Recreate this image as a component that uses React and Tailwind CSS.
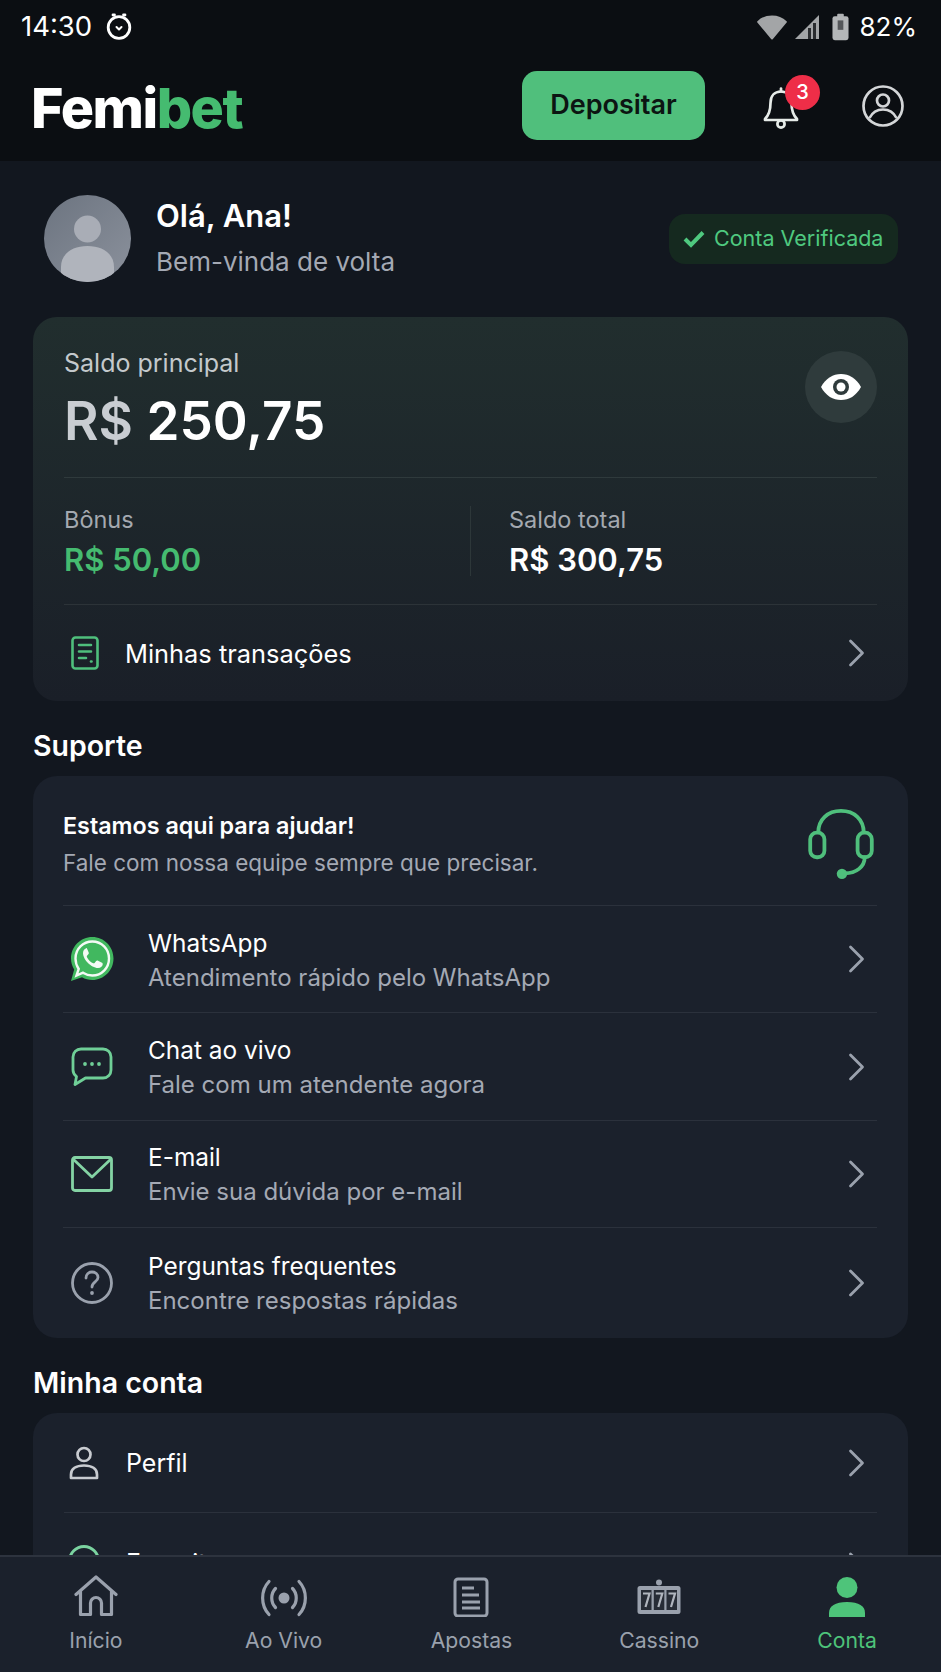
import React from 'react';

const font = { fontFamily: 'Inter, "Noto Sans", sans-serif' };

const Chevron = () => (
  <svg width="18" height="28" viewBox="0 0 18 28" fill="none" className="shrink-0">
    <path d="M2.5 2l12 12-12 12" stroke="#9aa1ad" strokeWidth="2.8" strokeLinecap="round" strokeLinejoin="round" />
  </svg>
);

const AlarmIcon = () => (
  <svg width="28" height="28" viewBox="0 0 28 28" fill="none" stroke="#fff" strokeWidth="2.8">
    <circle cx="14" cy="14.500" r="10.800" />
    <path d="M8 2h1.500M20 2h-1.500" strokeLinecap="round" />
    <path d="M11.500 14l2.500 2.500 2.500-2.500" strokeWidth="2" strokeLinecap="round" strokeLinejoin="round" />
  </svg>
);

const StatusIcons = () => (
  <div className="flex items-center">
    <svg width="32" height="26" viewBox="0 0 34 28" className="mr-[6px]">
      <path d="M2 8.500C6 4.500 11 2.500 17 2.500s11 2 15 6L17 26.500z" fill="#a3a5a7" stroke="#a3a5a7" strokeWidth="2" strokeLinejoin="round" />
    </svg>
    <svg width="26" height="26" viewBox="0 0 26 26" className="mr-[12px]">
      <path d="M1 25L25 1v24z" fill="#a3a5a7" />
      <path d="M14 14h3v11h-3zM19 9h3v16h-3z" fill="#2a2c2f" />
    </svg>
    <svg width="17" height="28" viewBox="0 0 18 28" className="mr-[11px]">
      <rect x="5.500" y="0" width="7" height="4" rx="1" fill="#b0b2b4" />
      <rect x="0.500" y="2.500" width="17" height="25.500" rx="2.500" fill="#b4b6b8" />
      <rect x="6" y="7" width="6" height="10" fill="#55575a" />
    </svg>
  </div>
);

const BellIcon = () => (
  <svg width="38" height="42" viewBox="0 0 38 42" fill="none" stroke="#e6ebe8" strokeWidth="2.700" strokeLinejoin="round">
    <path d="M19 4.500c-6.500 0-10.500 4.500-10.500 11.500 0 8-1.500 12-5.500 16v1h32v-1c-4-4-5.500-8-5.500-16 0-7-4-11.500-10.500-11.500z" />
    <path d="M19 1.500v3" strokeLinecap="round" />
    <circle cx="19" cy="37" r="3.600" />
  </svg>
);

const AccountIcon = () => (
  <svg width="42" height="42" viewBox="0 0 42 42" fill="none" stroke="#d4d6d8" strokeWidth="2.700">
    <circle cx="21" cy="21" r="19.500" />
    <circle cx="21" cy="15.500" r="6" />
    <path d="M7.500 33c3-6 8-8.500 13.500-8.500S31.500 27 34.500 33" />
  </svg>
);

const Avatar = () => (
  <svg width="87" height="87" viewBox="0 0 87 87" className="shrink-0 rounded-full">
    <defs>
      <linearGradient id="avatarBg" x1="0" y1="0" x2="1" y2="1">
        <stop offset="0" stopColor="#6c7480" />
        <stop offset="1" stopColor="#8b919c" />
      </linearGradient>
    </defs>
    <rect width="87" height="87" fill="url(#avatarBg)" />
    <circle cx="43.500" cy="34" r="13.500" fill="#a9adb6" />
    <path d="M17 87V72c0-13 11-21 26.500-21S70 59 70 72v15z" fill="#b0b4bc" />
  </svg>
);

const TransactionsIcon = () => (
  <svg width="28" height="34" viewBox="0 0 28 34" fill="none" stroke="#4fbf7c" strokeWidth="2.600" strokeLinecap="round">
    <rect x="1.500" y="1.500" width="25" height="31" rx="3" />
    <path d="M8 9h12M8 15.500h12M8 22h7" />
    <path d="M20 25.500h.5" />
  </svg>
);

const WhatsAppIcon = () => (
  <svg width="44" height="46" viewBox="0 0 44 46" className="shrink-0 -ml-[1px]">
    <path d="M1 45l3.200-11.500C2 29.900 1 26.200 1 22.500 1 10.600 10.500 1 22.300 1S43.500 10.600 43.500 22.500 34 44 22.300 44c-3.700 0-7.200-1-10.300-2.700z" fill="#41b85f" />
    <path d="M6.500 39.500l2.200-6.500c-2-3-3.200-6.800-3.200-10.500C5.500 13 13 5.500 22.300 5.500S39 13 39 22.500 31.600 39.500 22.300 39.500c-3.300 0-6.500-1-9.300-2.800z" fill="none" stroke="#f4faf5" strokeWidth="2.400" />
    <path d="M16 12.500c-1 0-3 1.500-3 4.500 0 3.500 2.500 7.500 5 10s6.500 5 10 5c3 0 4.500-2 4.700-3.500.1-1-.1-1.500-.7-1.800l-4-2c-.8-.3-1.400-.2-1.900.4l-1.500 1.900c-.4.400-.8.500-1.400.2-2.800-1.300-5-3.500-6.300-6.300-.2-.5-.1-1 .3-1.400l1.300-1.500c.4-.5.500-1 .2-1.600l-1.600-3.700c-.4-.7-.9-.7-1.100-.7z" fill="#f4faf5" />
  </svg>
);

const ChatIcon = () => (
  <svg width="42" height="40" viewBox="0 0 42 40" fill="none" className="shrink-0">
    <path d="M10 2h22c4.500 0 8 3.500 8 8v13c0 4.500-3.500 8-8 8H14.500L4 37.500l1.500-8C3.500 28 2 26 2 23V10c0-4.500 3.500-8 8-8z" stroke="#6fcf97" strokeWidth="2.800" strokeLinejoin="round" />
    <circle cx="14" cy="17" r="1.900" fill="#6fcf97" />
    <circle cx="21" cy="17" r="1.900" fill="#6fcf97" />
    <circle cx="28" cy="17" r="1.900" fill="#6fcf97" />
  </svg>
);

const MailIcon = () => (
  <svg width="42" height="36" viewBox="0 0 42 36" fill="none" stroke="#84d3a4" strokeWidth="2.800" strokeLinejoin="round" className="shrink-0">
    <rect x="1.500" y="1.500" width="39" height="33" rx="2.500" />
    <path d="M2 3l19 18L40 3" />
  </svg>
);

const HelpIcon = () => (
  <svg width="42" height="42" viewBox="0 0 42 42" fill="none" className="shrink-0">
    <circle cx="21" cy="21" r="19.500" stroke="#9aa1ad" strokeWidth="2.800" />
    <path d="M15 16c0-3.500 2.500-6 6-6s6 2.400 6 5.500c0 4.500-6 4.500-6 9.500" stroke="#9aa1ad" strokeWidth="2.800" strokeLinecap="round" />
    <circle cx="21" cy="31" r="1.900" fill="#9aa1ad" />
  </svg>
);

const HeadsetIcon = () => (
  <svg width="68" height="72" viewBox="0 0 70 76" fill="none" stroke="#4fbf7c" strokeWidth="4" className="shrink-0">
    <path d="M11 26C11 12 21 3 35 3s24 9 24 23" />
    <rect x="2.500" y="26" width="15" height="26" rx="7" />
    <rect x="52.500" y="26" width="15" height="26" rx="7" />
    <path d="M60 52c0 10-9 17-21 17" strokeLinecap="round" />
    <circle cx="36" cy="69.500" r="5.500" fill="#4fbf7c" stroke="none" />
  </svg>
);

const ProfileIcon = () => (
  <svg width="32" height="34" viewBox="0 0 32 34" fill="none" stroke="#c8cbd0" strokeWidth="2.700" className="shrink-0">
    <circle cx="16" cy="8.500" r="6.500" />
    <path d="M3 32v-3.500C3 23 8 19.500 16 19.500s13 3.500 13 9V32z" strokeLinejoin="round" />
  </svg>
);

const HomeIcon = () => (
  <svg width="44" height="42" viewBox="0 0 44 42" fill="none" stroke="#9aa1ad" strokeWidth="3.200" strokeLinejoin="round" strokeLinecap="round">
    <path d="M2 19.500L22 2l20 17.500" />
    <path d="M6.500 16.500V39.500h10V28c0-3 2.500-5.500 5.500-5.500s5.500 2.500 5.500 5.500v11.500h10V16.500" />
  </svg>
);

const LiveIcon = () => (
  <svg width="46" height="38" viewBox="0 0 46 38" fill="none" stroke="#9aa1ad" strokeWidth="3.200" strokeLinecap="round">
    <circle cx="23" cy="19" r="5.500" fill="#9aa1ad" stroke="none" />
    <path d="M14.500 9.500c-5 5-5 14 0 19M31.500 9.500c5 5 5 14 0 19" />
    <path d="M8 2.500c-8.500 9-8.500 24 0 33M38 2.500c8.500 9 8.500 24 0 33" />
  </svg>
);

const BetsIcon = () => (
  <svg width="36" height="40" viewBox="0 0 36 40" fill="none" stroke="#9aa1ad" className="shrink-0">
    <rect x="2" y="2" width="32" height="37" rx="3" strokeWidth="3" />
    <path d="M9 11h12M9 18h17M9 25h18M9 31h18" strokeWidth="2.800" />
  </svg>
);

const CasinoIcon = () => (
  <svg width="46" height="38" viewBox="0 0 46 38" fill="none" className="shrink-0">
    <circle cx="23" cy="3.500" r="3" fill="#9aa1ad" />
    <rect x="1.500" y="7" width="43" height="28" rx="2.500" fill="#9aa1ad" />
    <rect x="5" y="11" width="10.500" height="20" fill="#272c36" />
    <rect x="17.800" y="11" width="10.500" height="20" fill="#272c36" />
    <rect x="30.500" y="11" width="10.500" height="20" fill="#272c36" />
    <path d="M7 14.500h6.500L9.500 28M19.800 14.500h6.500L22.300 28M32.500 14.500H39L35 28" stroke="#b0b5be" strokeWidth="2.200" />
  </svg>
);

const ContaIcon = () => (
  <svg width="38" height="40" viewBox="0 0 38 40" fill="#4ec47a">
    <circle cx="19" cy="10.500" r="10.500" />
    <path d="M1 40v-4c0-7 6-11 18-11s18 4 18 11v4z" />
  </svg>
);

const suporteItems = [
  { title: 'WhatsApp', sub: 'Atendimento rápido pelo WhatsApp', icon: <WhatsAppIcon /> },
  { title: 'Chat ao vivo', sub: 'Fale com um atendente agora', icon: <ChatIcon /> },
  { title: 'E-mail', sub: 'Envie sua dúvida por e-mail', icon: <MailIcon /> },
  { title: 'Perguntas frequentes', sub: 'Encontre respostas rápidas', icon: <HelpIcon /> },
];

const navItems = [
  { label: 'Início', icon: <HomeIcon /> },
  { label: 'Ao Vivo', icon: <LiveIcon /> },
  { label: 'Apostas', icon: <BetsIcon /> },
  { label: 'Cassino', icon: <CasinoIcon /> },
  { label: 'Conta', icon: <ContaIcon />, active: true },
];

export default function App() {
  return (
    <div className="flex flex-col h-[1672px] w-[941px] overflow-hidden bg-[#12171f] text-white" style={font}>
      {/* Header */}
      <header className="shrink-0 h-[161px] bg-[#0b0e12] pl-[21px] pr-[24px]">
        <div className="flex items-center justify-between h-[54px]">
          <div className="flex items-center gap-[13px]">
            <span className="text-[27.500px] leading-none">14:30</span>
            <AlarmIcon />
          </div>
          <div className="flex items-center">
            <StatusIcons />
            <span className="text-[26px] leading-none">82%</span>
          </div>
        </div>
        <div className="flex items-center justify-between mt-[17px] pl-[10px] pr-[13px]">
          <div className="mt-[4px] text-[55.500px] leading-none font-extrabold tracking-[-1.500px]">
            Femi<span className="text-[#45bb70]">bet</span>
          </div>
          <div className="flex items-center">
            <button className="w-[183px] h-[69px] rounded-[15px] bg-[#50bf7c] text-[#0c1512] text-[27px] font-semibold">
              Depositar
            </button>
            <div className="relative ml-[57px] mt-[4px]">
              <BellIcon />
              <div className="absolute -top-[12px] left-[23px] w-[35px] h-[35px] rounded-full bg-[#ee2e48] flex items-center justify-center text-[20px] font-medium">
                3
              </div>
            </div>
            <div className="ml-[62px]">
              <AccountIcon />
            </div>
          </div>
        </div>
      </header>

      <main className="flex-1 min-h-0 overflow-hidden px-[33px]">
        {/* Greeting */}
        <div className="flex items-center justify-between pt-[34px] pl-[11px]">
          <div className="flex items-center gap-[25px]">
            <Avatar />
            <div>
              <div className="text-[31px] leading-[36px] font-semibold -mt-[3px]">Olá, Ana!</div>
              <div className="text-[26px] leading-[30px] mt-[13px] text-[#a4a9b4]">Bem-vinda de volta</div>
            </div>
          </div>
          <div className="flex items-center gap-[9px] h-[50px] w-[229px] mr-[10px] pl-[14px] rounded-[16px] bg-[#15291f] text-[#4fc97f] text-[21.500px]">
            <svg width="22" height="18" viewBox="0 0 22 18" fill="none" stroke="#4fc97f" strokeWidth="4" className="shrink-0">
              <path d="M2 9l6 6L20 2.500" />
            </svg>
            <span className="whitespace-nowrap">Conta Verificada</span>
          </div>
        </div>

        {/* Saldo */}
        <section className="mt-[35px] rounded-[24px] bg-gradient-to-b from-[#212e2e] to-[#1a1f28] px-[31px]">
          <div className="flex justify-between pt-[31px] h-[161px] border-b border-[#2f3a3c]">
            <div>
              <div className="text-[25px] leading-[30px] text-[#c4c9cc]">Saldo principal</div>
              <div className="text-[53px] leading-[62px] mt-[12px] font-semibold">
                <span className="text-[#c9cdd2]">R$</span> 250,75
              </div>
            </div>
            <div className="w-[72px] h-[72px] rounded-full bg-[#2f3b3c] flex items-center justify-center mt-[3px]">
              <svg width="42" height="28" viewBox="0 0 42 28" fill="none">
                <path d="M1 14C6 5 13 1 21 1s15 4 20 13c-5 9-12 13-20 13S6 23 1 14z" fill="#fff" />
                <circle cx="21" cy="14" r="8" fill="#2f3b3c" />
                <circle cx="21" cy="14" r="4.500" fill="#fff" />
              </svg>
            </div>
          </div>
          <div className="flex items-center h-[127px] border-b border-[#2c3338]">
            <div className="w-[407px] h-[70px] border-r border-[#2d3739]">
              <div className="text-[23.500px] leading-[28px] text-[#a4a9b0]">Bônus</div>
              <div className="text-[31px] leading-[38px] mt-[7px] font-semibold text-[#45bb70]">R$ 50,00</div>
            </div>
            <div className="pl-[38px] h-[70px]">
              <div className="text-[23.500px] leading-[28px] text-[#a4a9b0]">Saldo total</div>
              <div className="text-[31px] leading-[38px] mt-[7px] font-semibold">R$ 300,75</div>
            </div>
          </div>
          <div className="flex items-center justify-between h-[96px] pl-[7px] pr-[11px]">
            <div className="flex items-center gap-[26px]">
              <TransactionsIcon />
              <span className="text-[25.400px] mt-[2px]">Minhas transações</span>
            </div>
            <Chevron />
          </div>
        </section>

        {/* Suporte */}
        <h2 className="mt-[27px] text-[28.500px] leading-[36px] font-semibold">Suporte</h2>
        <section className="mt-[12px] rounded-[24px] bg-[#1b212c] pl-[30px] pr-[31px]">
          <div className="flex items-center justify-between h-[130px] pt-[7px] pr-[2px] border-b border-[#2b313c]">
            <div>
              <div className="text-[23.300px] leading-[30px] font-semibold">Estamos aqui para ajudar!</div>
              <div className="text-[22.500px] leading-[30px] mt-[7px] text-[#a4a9b4]">Fale com nossa equipe sempre que precisar.</div>
            </div>
            <HeadsetIcon />
          </div>
          {suporteItems.map((item, i) => (
            <div
              key={item.title}
              className={`flex items-center pr-[11px] ${i < suporteItems.length - 1 ? 'h-[107.400px] border-b border-[#2b313c]' : 'h-[110px] pb-[1px]'}`}
            >
              <div className="w-[85px] pl-[8px] flex items-center">{item.icon}</div>
              <div className="flex-1 pt-[2px]">
                <div className="text-[24.400px] leading-[30px]">{item.title}</div>
                <div className="text-[24px] leading-[30px] mt-[5px] text-[#a4a9b4]">{item.sub}</div>
              </div>
              <Chevron />
            </div>
          ))}
        </section>

        {/* Minha conta */}
        <h2 className="mt-[27px] text-[28.500px] leading-[36px] font-semibold">Minha conta</h2>
        <section className="mt-[12px] rounded-[24px] bg-[#1b212c] px-[31px]">
          <div className="flex items-center justify-between h-[100px] pr-[11px] border-b border-[#2b313c]">
            <div className="flex items-center gap-[26px] pl-[4px]">
              <ProfileIcon />
              <span className="text-[25px] mt-[2px]">Perfil</span>
            </div>
            <Chevron />
          </div>
          <div className="flex items-center justify-between h-[106px] pr-[11px]">
            <div className="flex items-center gap-[26px] pl-[4px]">
              <div className="w-[32px] h-[32px] -mt-[10px] rounded-full border-[3px] border-[#7bd3a0]"></div>
              <span className="text-[25px] -mt-[5px]">Favoritos</span>
            </div>
            <Chevron />
          </div>
        </section>
      </main>

      {/* Bottom nav */}
      <nav className="shrink-0 h-[117px] grid grid-cols-5 bg-[#1b212c] border-t-2 border-[#2d333e] pl-[2px]">
        {navItems.map((item) => (
          <div key={item.label} className="flex flex-col items-center pt-[18px]">
            <div className="h-[42px] flex items-end justify-center">{item.icon}</div>
            <span className={`mt-[9px] text-[21.200px] leading-[28px] ${item.active ? 'text-[#4ec47a]' : 'text-[#9aa1ad]'}`}>
              {item.label}
            </span>
          </div>
        ))}
      </nav>
    </div>
  );
}
